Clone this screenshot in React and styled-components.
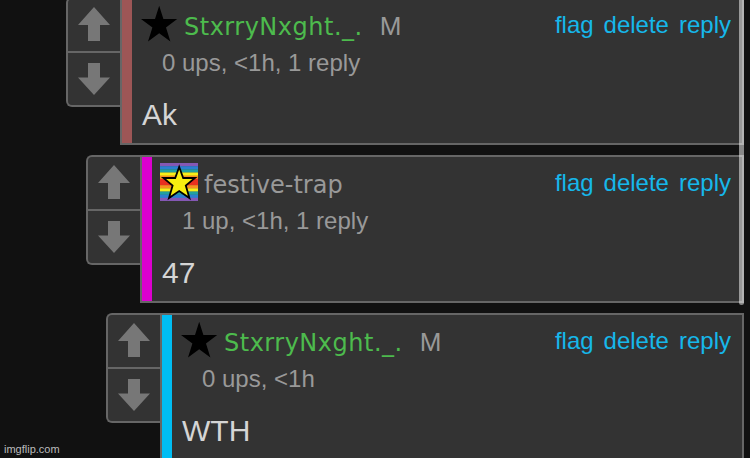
import React, { Component } from 'react';
import styled, { createGlobalStyle } from 'styled-components';

const comments = [
  { id: 1, user: 'StxrryNxght._.', icon: 'black', mood: 'M', meta: '0 ups, <1h, 1 reply', text: 'Ak', bar: '#9d5656', depth: 0 },
  { id: 2, user: 'festive-trap', icon: 'rainbow', meta: '1 up, <1h, 1 reply', text: '47', bar: '#dc00cf', depth: 1 },
  { id: 3, user: 'StxrryNxght._.', icon: 'black', mood: 'M', meta: '0 ups, <1h', text: 'WTH', bar: '#00bdf3', depth: 2 },
];

const stripes = ['#8458b4', '#2c7fd0', '#22a0a0', '#f8ee18', '#f89020', '#e83020', '#e83020', '#f89020', '#f8ee18', '#22a0a0', '#2c7fd0', '#8458b4'];

const Arrow = ({ down }) => (
  <svg width="32" height="34" viewBox="0 0 32 34">
    <path
      fill="#777"
      d={down ? 'M10 1 H22 V15.5 H32 L16 33 L0 15.5 H10 Z' : 'M16 0 L32 18 H22 V34 H10 V18 H0 Z'}
    />
  </svg>
);

const UserIcon = ({ type }) => {
  if (type === 'rainbow') {
    return (
      <svg width="38" height="38" viewBox="0 0 38 38">
        {stripes.map((color, i) => (
          <rect key={i} y={(i * 38) / 12} width="38" height="3.4" fill={color} />
        ))}
        <path
          fill="#f8ee10"
          stroke="#000"
          strokeWidth="1.8"
          d="M19.2 4 L23.2 15 H35 L25.8 22.6 L29.4 35 L19.2 28 L9 35 L12.6 22.6 L3.4 15 H15.2 Z"
        />
      </svg>
    );
  }
  return (
    <svg width="38" height="38" viewBox="0 0 38 38">
      <path d="M19.2 0.8 L23.4 14 H37.2 L26 22.4 L30.4 36.6 L19.2 28.2 L8 36.6 L12.4 22.4 L1 14 H15 Z" />
    </svg>
  );
};

class Comment extends Component {
  render() {
    const { comment } = this.props;
    return (
      <Row $depth={comment.depth}>
        <Votes>
          <VoteButton aria-label="upvote"><Arrow /></VoteButton>
          <VoteButton aria-label="downvote" $down><Arrow down /></VoteButton>
        </Votes>
        <Card>
          <ColorBar $color={comment.bar} />
          <Content>
            <Header>
              <UserIcon type={comment.icon} />
              <UserInfo>
                <UserName $highlight={comment.icon === 'black'}>{comment.user}</UserName>
                {comment.mood && <Mood>{comment.mood}</Mood>}
              </UserInfo>
              <Actions>
                <Action>flag</Action>
                <Action>delete</Action>
                <Action>reply</Action>
              </Actions>
            </Header>
            <Meta>{comment.meta}</Meta>
            <Text>{comment.text}</Text>
          </Content>
        </Card>
      </Row>
    );
  }
}

class App extends Component {
  render() {
    return (
      <Page>
        <GlobalStyle />
        <Thread>
          {comments.map(comment => (
            <Comment key={comment.id} comment={comment} />
          ))}
        </Thread>
        <ScrollThumb />
        <Watermark>imgflip.com</Watermark>
      </Page>
    );
  }
}

const GlobalStyle = createGlobalStyle`
  body {
    margin: 0;
    background: #111;
    overflow: hidden;
  }
  * {
    box-sizing: border-box;
  }
`;

const Page = styled.div`
  position: relative;
  height: 458px;
  overflow: hidden;
  background: #111;
  font-family: "Liberation Sans", Arial, sans-serif;
`;

const Thread = styled.div`
  display: flex;
  flex-direction: column;
  gap: 10px;
  margin-top: -3px;
  padding: 0 6px 0 66px;
`;

const Row = styled.div`
  display: flex;
  align-items: flex-start;
  height: 148px;
  margin-left: ${props => props.$depth * 20}px;
`;

const Votes = styled.div`
  width: 54px;
  height: 110px;
  border: 2px solid #666;
  border-right: none;
  border-radius: 6px 0 0 6px;
  background: #333;
`;

const VoteButton = styled.button`
  display: flex;
  justify-content: center;
  width: 100%;
  height: ${props => (props.$down ? '54px' : '52px')};
  padding: ${props => (props.$down ? '9px' : '8px')} 0 0;
  border: none;
  border-top: ${props => (props.$down ? '2px solid #666' : 'none')};
  background: transparent;
`;

const Card = styled.div`
  display: flex;
  flex: 1;
  height: 148px;
  border: 2px solid #666;
  background: #333;
`;

const ColorBar = styled.div`
  width: 10px;
  background: ${props => props.$color};
`;

const Content = styled.div`
  flex: 1;
  padding: 6px 11px 0 8px;
`;

const Header = styled.div`
  display: flex;
  height: 44px;
`;

const UserInfo = styled.div`
  display: flex;
  align-items: baseline;
  gap: 17px;
  height: 30px;
  margin: 7px 0 0 6px;
`;

const UserName = styled.span`
  font-family: "DejaVu Sans", Verdana, sans-serif;
  font-size: 24px;
  line-height: 30px;
  letter-spacing: ${props => (props.$highlight ? '0.5px' : 'normal')};
  color: ${props => (props.$highlight ? '#4dbb4d' : '#999')};
`;

const Mood = styled.span`
  font-size: 26px;
  line-height: 28px;
  color: #999;
`;

const Actions = styled.div`
  display: flex;
  gap: 10px;
  margin: 6px 0 0 auto;
`;

const Action = styled.a`
  font-size: 24px;
  line-height: 28px;
  color: #16b7ea;
`;

const Meta = styled.div`
  padding-left: 22px;
  font-size: 24px;
  line-height: 28px;
  color: #999;
`;

const Text = styled.div`
  margin-top: 20px;
  padding-left: 2px;
  font-size: 30px;
  line-height: 36px;
  color: #d5d5d5;
`;

// floats over the right edge of the thread
const ScrollThumb = styled.div`
  position: absolute;
  top: 0;
  right: 6px;
  width: 5px;
  height: 305px;
  border-radius: 0 0 3px 3px;
  background: rgba(255, 255, 255, 0.5);
`;

const Watermark = styled.div`
  position: absolute;
  left: 4px;
  bottom: 2px;
  font-size: 11px;
  line-height: 13px;
  color: #bbb;
`;

export default App;
